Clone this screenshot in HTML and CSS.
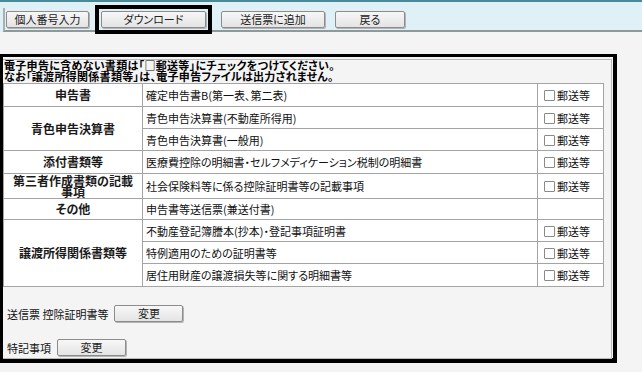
FILE: index.html
```html
<!DOCTYPE html>
<html lang="ja">
<head>
    <meta charset="UTF-8">
    <title>電子申告書類</title>
    <link rel="stylesheet" href="styles.css">
</head>
<body>
    <div class="toolbar">
        <div class="toolbar-inner">
            <button class="tbtn btn-mynumber">個人番号入力</button>
            <div class="focus-ring">
                <button class="tbtn btn-download">ダウンロード</button>
            </div>
            <button class="tbtn btn-add">送信票に追加</button>
            <button class="tbtn btn-back">戻る</button>
        </div>
    </div>

    <div class="frame">
        <div class="panel">
            <p class="notice">電子申告に含めない書類は「□郵送等」にチェックをつけてください。<br>なお「譲渡所得関係書類等」は、電子申告ファイルは出力されません。</p>

            <table class="docs">
                <colgroup>
                    <col class="col-head">
                    <col class="col-name">
                    <col class="col-check">
                </colgroup>
                <tr class="h23">
                    <th>申告書</th>
                    <td>確定申告書B(第一表、第二表)</td>
                    <td class="check"><span class="box"></span>郵送等</td>
                </tr>
                <tr class="h22">
                    <th rowspan="2">青色申告決算書</th>
                    <td>青色申告決算書(不動産所得用)</td>
                    <td class="check"><span class="box"></span>郵送等</td>
                </tr>
                <tr class="h22">
                    <td>青色申告決算書(一般用)</td>
                    <td class="check"><span class="box"></span>郵送等</td>
                </tr>
                <tr class="h23">
                    <th>添付書類等</th>
                    <td>医療費控除の明細書・セルフメディケーション税制の明細書</td>
                    <td class="check"><span class="box"></span>郵送等</td>
                </tr>
                <tr class="h25">
                    <th class="wrap">第三者作成書類の記載事項</th>
                    <td>社会保険料等に係る控除証明書等の記載事項</td>
                    <td class="check"><span class="box"></span>郵送等</td>
                </tr>
                <tr class="h21">
                    <th>その他</th>
                    <td>申告書等送信票(兼送付書)</td>
                    <td class="check"></td>
                </tr>
                <tr class="h22">
                    <th rowspan="3">譲渡所得関係書類等</th>
                    <td>不動産登記簿謄本(抄本)・登記事項証明書</td>
                    <td class="check"><span class="box"></span>郵送等</td>
                </tr>
                <tr class="h22">
                    <td>特例適用のための証明書等</td>
                    <td class="check"><span class="box"></span>郵送等</td>
                </tr>
                <tr class="h23">
                    <td>居住用財産の譲渡損失等に関する明細書等</td>
                    <td class="check"><span class="box"></span>郵送等</td>
                </tr>
            </table>

            <div class="extra-row first">
                <span class="extra-label">送信票 控除証明書等</span>
                <button class="sbtn">変更</button>
            </div>
            <div class="extra-row">
                <span class="extra-label">特記事項</span>
                <button class="sbtn">変更</button>
            </div>
        </div>
    </div>
</body>
</html>
```

FILE: styles.css
```css
body {
    margin: 0;
    width: 642px;
    height: 372px;
    overflow: hidden;
    background-color: #f4f4f4;
    font-family: "Noto Sans CJK JP", "Noto Sans", sans-serif;
    font-size: 11px;
    color: #111;
    font-feature-settings: "palt";
}

/* ツールバー */
.toolbar {
    box-sizing: border-box;
    height: 32px;
    background-color: #dff1f7;
    border-top: 2px solid #4a8a98;
    padding-left: 3px;
}

.toolbar-inner {
    box-sizing: border-box;
    height: 24px;
    margin-top: 6px;
    border-left: 2px solid #a7b1b3;
    border-bottom: 2px solid #8e999b;
    display: flex;
    align-items: center;
}

.tbtn,
.sbtn {
    box-sizing: border-box;
    height: 17px;
    padding: 0;
    font-family: inherit;
    font-size: 11px;
    font-feature-settings: "palt";
    line-height: 15px;
    color: #222;
    background: linear-gradient(#f7f7f7, #e4e4e4);
    border: 1px solid #8c8c8c;
    border-radius: 2px;
    box-shadow: 1px 1px 0 #b4b4b4;
}

.btn-mynumber {
    width: 83px;
    margin-left: 1px;
}

.focus-ring {
    display: flex;
    margin-left: 6px;
    padding: 2px;
    border: 4px solid #000;
}

.btn-download {
    width: 105px;
}

.btn-add {
    width: 104px;
    margin-left: 9px;
}

.btn-back {
    width: 70px;
    margin-left: 10px;
}

/* 黒枠 */
.frame {
    box-sizing: border-box;
    width: 617px;
    height: 309px;
    margin-top: 22px;
    border-style: solid;
    border-color: #000;
    border-width: 3px 4px 5px 3px;
    padding: 2px 1px 0 0;
}

.panel {
    box-sizing: border-box;
    height: 300px;
    border: 1px solid #b9b9b9;
    border-left: none;
}

.notice {
    margin: 0;
    padding-left: 1px;
    font-size: 11px;
    font-weight: bold;
    line-height: 11px;
    letter-spacing: 0.3px;
    color: #000;
}

.docs {
    width: 601px;
    margin-top: 1px;
    border-collapse: collapse;
    table-layout: fixed;
    background-color: #fff;
}

.col-head {
    width: 139px;
}

.col-check {
    width: 66px;
}

.docs th,
.docs td {
    padding: 0 3px;
    border: 1px solid #a4a4a4;
    line-height: 12px;
    white-space: nowrap;
}

.docs th {
    font-size: 12px;
    font-weight: bold;
    color: #1a1a1a;
    text-align: center;
}

.docs th.wrap {
    white-space: normal;
    line-height: 11px;
    padding: 0 8px;
}

.docs td.check {
    padding-left: 6px;
}

.box {
    display: inline-block;
    width: 9px;
    height: 9px;
    margin-right: 2px;
    vertical-align: -1px;
    background-color: #fff;
    border: 1px solid #8a8a8a;
    border-radius: 1px;
}

.h21 { height: 21px; }
.h22 { height: 22px; }
.h23 { height: 23px; }
.h25 { height: 25px; }

/* 下部の行 */
.extra-row {
    display: flex;
    align-items: center;
    height: 17px;
    margin-top: 17px;
    padding-left: 4px;
}

.extra-row.first {
    margin-top: 18px;
}

.extra-label {
    margin-right: 6px;
}

.sbtn {
    width: 69px;
}
```
